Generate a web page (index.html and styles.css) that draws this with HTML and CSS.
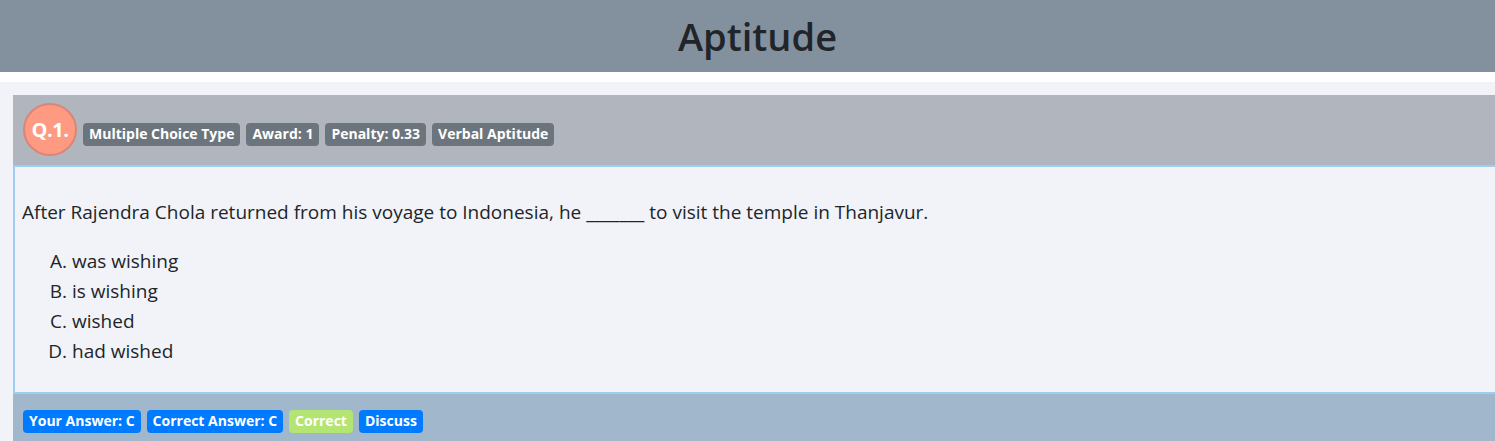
FILE: index.html
```
<!DOCTYPE html>
<html lang="en">
<head>
<meta charset="utf-8">
<title>Aptitude</title>
<link rel="stylesheet" href="styles.css">
</head>
<body>
<header class="topbar">
  <h1 class="title">Aptitude</h1>
</header>
<main class="page">
  <section class="card">
    <div class="card-head">
      <span class="qnum">Q.1.</span>
      <span class="badge badge-gray">Multiple Choice Type</span>
      <span class="badge badge-gray">Award: 1</span>
      <span class="badge badge-gray">Penalty: 0.33</span>
      <span class="badge badge-gray">Verbal Aptitude</span>
    </div>
    <div class="card-body">
      <p class="question">After Rajendra Chola returned from his voyage to Indonesia, he _______ to visit the temple in Thanjavur.</p>
      <ol class="options">
        <li>was wishing</li>
        <li>is wishing</li>
        <li>wished</li>
        <li>had wished</li>
      </ol>
    </div>
    <div class="card-foot">
      <span class="badge badge-blue">Your Answer: C</span>
      <span class="badge badge-blue">Correct Answer: C</span>
      <span class="badge badge-green">Correct</span>
      <span class="badge badge-blue">Discuss</span>
    </div>
  </section>
</main>
</body>
</html>
```

FILE: styles.css
```
html, body {
  margin: 0;
  padding: 0;
  overflow: hidden;
}
body {
  font-family: "Open Sans", "Noto Sans", sans-serif;
  color: #212529;
  background: #ffffff;
}
.topbar {
  background: #83919e;
  height: 72px;
  display: flex;
  align-items: center;
  justify-content: center;
  padding-left: 20px;
}
.title {
  margin: 0;
  font-size: 38px;
  font-weight: 600;
  color: #212529;
}
.page {
  margin-top: 10px;
  background: #f1f3f8;
  padding: 13px 0 0 13px;
  width: 1600px;
}
.card {
  width: 1560px;
}
.card-head {
  background: #b1b5bd;
  height: 70px;
  display: flex;
  align-items: center;
  padding-left: 10px;
  gap: 6px;
  border-bottom: 2px solid #9fcdf0;
}
.qnum {
  width: 54px;
  height: 53px;
  border-radius: 50%;
  background: #fe9a81;
  border: 2px solid #d98678;
  box-sizing: border-box;
  color: #fff;
  font-weight: 700;
  font-size: 20px;
  display: flex;
  align-items: center;
  justify-content: center;
  margin-top: -2px;
  letter-spacing: -0.5px;
}
.card-head .badge {
  margin-top: 8px;
}
.badge {
  display: inline-block;
  font-size: 14px;
  font-weight: 700;
  color: #fff;
  line-height: 1;
  padding: 4px 6px 5px;
  border-radius: 4px;
}
.card-head .badge-gray {
  font-size: 14px;
  padding: 4px 6px 5px;
}
.badge-gray { background: #6c757d; }
.badge-blue { background: #007bff; }
.badge-green { background: #b4e573; }
.card-body {
  border-left: 2px solid #9fcdf0;
  padding: 32px 7px 16px;
  height: 177px;
}
.question {
  margin: 0 0 21px;
  font-size: 19px;
  line-height: 26px;
}
.options {
  margin: 0;
  padding-left: 50px;
  list-style-type: upper-alpha;
  font-size: 19px;
  line-height: 30px;
}
.card-foot {
  border-top: 2px solid #9fcdf0;
  background: #a0b7cc;
  height: 60px;
  display: flex;
  align-items: flex-start;
  padding: 16px 0 0 10px;
  box-sizing: border-box;
  gap: 6px;
}
```
